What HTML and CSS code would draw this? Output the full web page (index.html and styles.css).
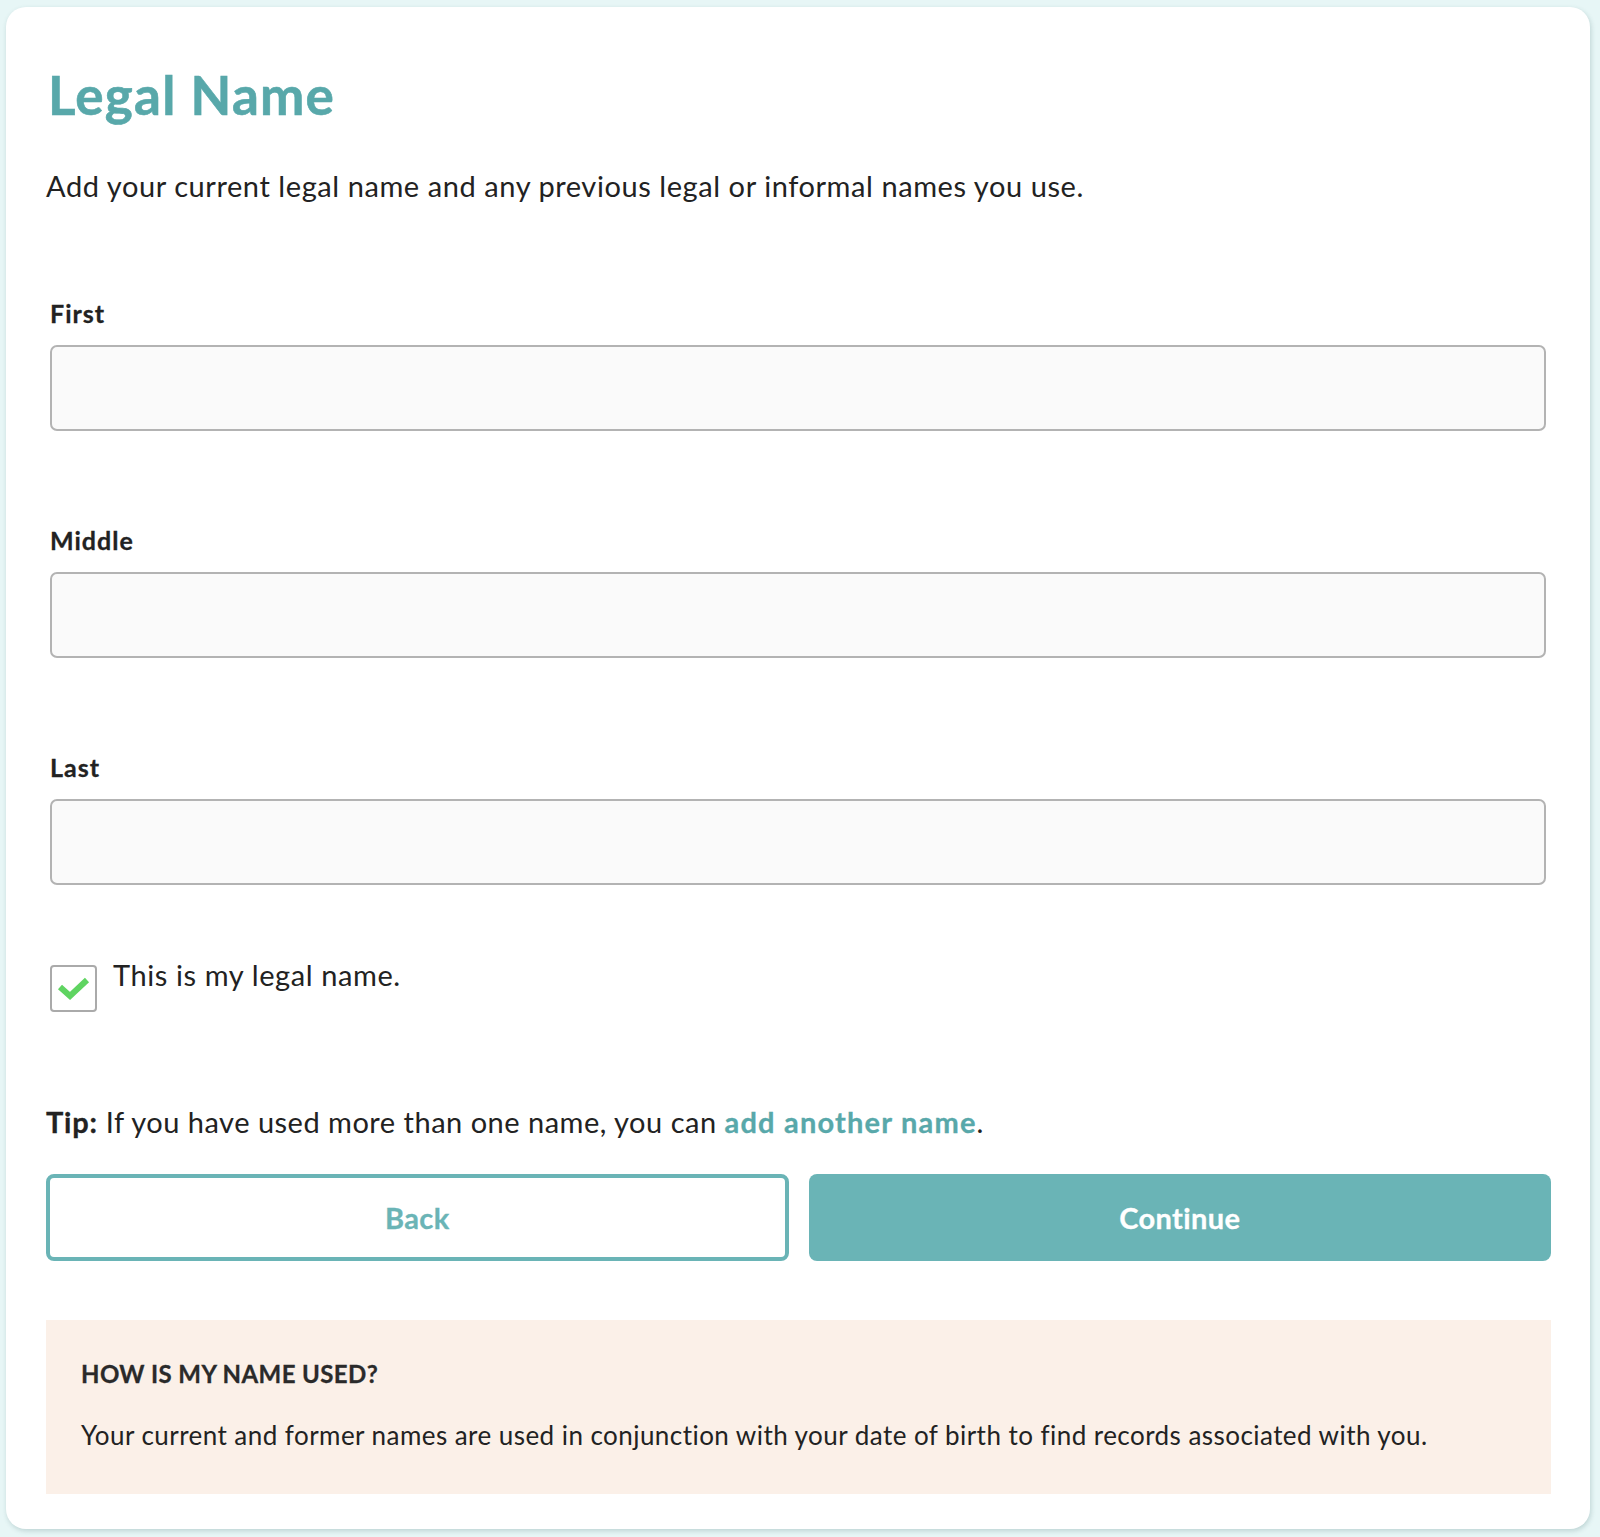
FILE: index.html
```html
<!DOCTYPE html>
<html lang="en">
<head>
<meta charset="utf-8">
<title>Legal Name</title>
<link rel="stylesheet" href="styles.css">
</head>
<body>
<main class="card">
  <h1 class="title">Legal Name</h1>
  <p class="intro">Add your current legal name and any previous legal or informal names you use.</p>

  <div class="field field-first">
    <label class="field-label" for="first">First</label>
    <input class="field-input" id="first" type="text">
  </div>
  <div class="field">
    <label class="field-label" for="middle">Middle</label>
    <input class="field-input" id="middle" type="text">
  </div>
  <div class="field">
    <label class="field-label" for="last">Last</label>
    <input class="field-input" id="last" type="text">
  </div>

  <div class="check-row">
    <span class="checkbox">
      <svg width="47" height="47" viewBox="0 0 47 47"><path d="M10 22 L20 31 L37 15" fill="none" stroke="#5fd461" stroke-width="6" stroke-linecap="butt" stroke-linejoin="miter"/></svg>
    </span>
    <span class="check-text">This is my legal name.</span>
  </div>

  <p class="tip"><strong>Tip:</strong> If you have used more than one name, you can <a class="tip-link" href="#">add another name</a>.</p>

  <div class="actions">
    <button class="btn btn-back" type="button">Back</button>
    <button class="btn btn-continue" type="button">Continue</button>
  </div>

  <section class="info">
    <h2 class="info-title">HOW IS MY NAME USED?</h2>
    <p class="info-text">Your current and former names are used in conjunction with your date of birth to find records associated with you.</p>
  </section>
</main>
</body>
</html>
```

FILE: styles.css
```css
html, body {
  margin: 0;
  padding: 0;
}
body {
  background: #e7f6f6;
  font-family: Lato, "Source Sans Pro", "Open Sans", sans-serif;
  color: #222;
  padding: 7px 10px 9px 6px;
}
.card {
  display: block;
  background: #fff;
  border-radius: 20px;
  box-shadow: 1px 2px 5px rgba(40, 90, 90, 0.22);
  padding: 57px 39px 35px 40px;
}
.title {
  margin: 0 0 0 2px;
  font-size: 53px;
  line-height: 61px;
  font-weight: 700;
  letter-spacing: 1.2px;
  -webkit-text-stroke: 0.6px #58a8aa;
  color: #58a8aa;
}
.intro {
  margin: 43px 0 0 0;
  font-size: 29px;
  line-height: 36px;
  letter-spacing: 0.57px;
  color: #222;
}
.field {
  display: flex;
  flex-direction: column;
  gap: 16px;
  padding: 0 5px 0 4px;
  margin-top: 93px;
}
.field-label {
  font-size: 25px;
  line-height: 32px;
  font-weight: 700;
  letter-spacing: 1px;
  -webkit-text-stroke: 0.3px #222;
  color: #222;
}
.field-input {
  box-sizing: border-box;
  height: 86px;
  width: 100%;
  background: #fafafa;
  border: 2px solid #b3b3b3;
  border-radius: 7px;
  margin: 0;
  font: inherit;
}
.check-row {
  display: flex;
  align-items: flex-start;
  gap: 16px;
  margin-top: 72px;
  padding-left: 4px;
}
.checkbox {
  box-sizing: border-box;
  width: 47px;
  height: 47px;
  border: 2px solid #aaa;
  border-radius: 4px;
  margin-top: 8px;
  display: flex;
  align-items: center;
  justify-content: center;
}
.checkbox svg {
  display: block;
  margin: -2px;
}
.check-text {
  font-size: 29px;
  line-height: 36px;
  letter-spacing: 0.6px;
}
.tip {
  margin: 92px 0 0 0;
  font-size: 29px;
  line-height: 36px;
  letter-spacing: 0.5px;
}
.tip strong {
  font-weight: 700;
  letter-spacing: 0.8px;
  -webkit-text-stroke: 0.3px #222;
}
.tip-link {
  color: #58a8aa;
  font-weight: 700;
  letter-spacing: 1.2px;
  -webkit-text-stroke: 0.3px #58a8aa;
  text-decoration: none;
}
.actions {
  display: grid;
  grid-template-columns: 1fr 1fr;
  gap: 20px;
  margin-top: 34px;
}
.btn {
  box-sizing: border-box;
  height: 87px;
  font-family: inherit;
  font-size: 29px;
  font-weight: 700;
  letter-spacing: 0.4px;
  border-radius: 8px;
  cursor: pointer;
}
.btn-back {
  background: #fff;
  color: #6ab4b6;
  -webkit-text-stroke: 0.3px #6ab4b6;
  border: 4px solid #6ab4b6;
}
.btn-continue {
  background: #6ab4b6;
  color: #fff;
  -webkit-text-stroke: 0.3px #fff;
  border: none;
}
.info {
  background: #fbf0e8;
  margin-top: 59px;
  padding: 39px 35px 42px 35px;
}
.info-title {
  margin: 0;
  font-size: 24px;
  line-height: 30px;
  font-weight: 700;
  letter-spacing: 0.4px;
  -webkit-text-stroke: 0.3px #2a2a2a;
  color: #2a2a2a;
}
.info-text {
  margin: 29px 0 0 0;
  font-size: 26px;
  line-height: 34px;
  letter-spacing: 0.45px;
  color: #222;
}
```
